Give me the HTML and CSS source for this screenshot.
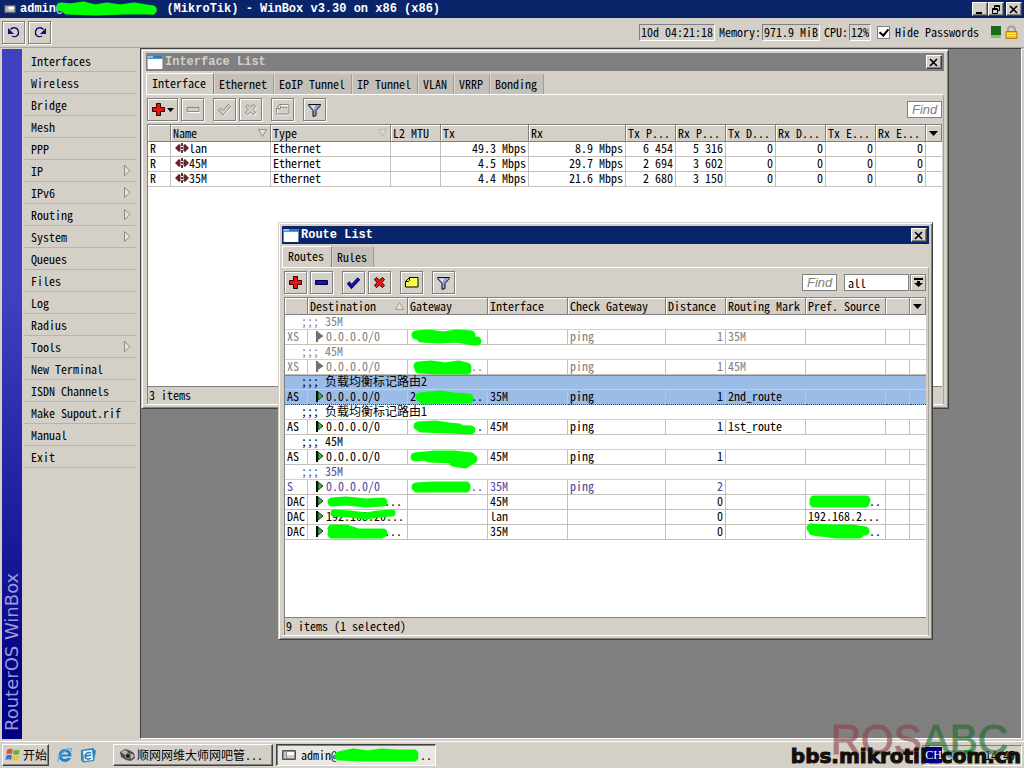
FILE: index.html
```html
<!DOCTYPE html>
<html lang="zh-CN">
<head>
<meta charset="utf-8">
<meta name="viewport" content="width=device-width, initial-scale=1">
<title>WinBox v3.30</title>
<link rel="stylesheet" href="styles.css">
</head>
<body>
<svg class="defs" aria-hidden="true">
  <symbol id="plus" viewBox="0 0 13 13"><path d="M4.500.5h4v4h4v4h-4v4h-4v-4h-4v-4h4z" fill="#e01818" stroke="#300"/></symbol>
  <symbol id="minus" viewBox="0 0 13 13"><path d="M.5 4.500h12v4h-12z" fill="#1818c0" stroke="#000040"/></symbol>
  <symbol id="minus-off" viewBox="0 0 13 13"><path d="M1.500 5.500h12v4h-12z" fill="none" stroke="#fff"/><path d="M.5 4.500h12v4h-12z" fill="#d4d0c8" stroke="#8c8880"/></symbol>
  <symbol id="check" viewBox="0 0 13 13"><path d="M1 6.500l3.500 4 7.500-8" fill="none" stroke="#000070" stroke-width="3.600"/><path d="M1.500 6.800l3 3 7-7" fill="none" stroke="#1818d0" stroke-width="1.500"/></symbol>
  <symbol id="check-off" viewBox="0 0 13 13"><path d="M1.500 7.500l2-2 2 2 6-6.500 1.500 1.500-7.500 8.500z" fill="none" stroke="#fff" transform="translate(1 1)"/><path d="M.5 7l2-2 2.500 2.500 5.500-6 2 2-7.500 8.500z" fill="#d4d0c8" stroke="#8c8880"/></symbol>
  <symbol id="cross" viewBox="0 0 13 13"><path d="M1.500 3.500l2-2 3 2.500 3-2.500 2 2-2.500 3 2.500 3-2 2-3-2.500-3 2.500-2-2 2.500-3z" fill="#e01818" stroke="#300"/></symbol>
  <symbol id="cross-off" viewBox="0 0 13 13"><path d="M1.500 3.500l2-2 3 2.500 3-2.500 2 2-2.500 3 2.500 3-2 2-3-2.500-3 2.500-2-2 2.500-3z" fill="none" stroke="#fff" transform="translate(1 1)"/><path d="M1.500 3.500l2-2 3 2.500 3-2.500 2 2-2.500 3 2.500 3-2 2-3-2.500-3 2.500-2-2 2.500-3z" fill="#d4d0c8" stroke="#8c8880"/></symbol>
  <symbol id="note" viewBox="0 0 14 13"><path d="M.5 5.500l4-4h8.500v9.500H.5z" fill="#ffff50" stroke="#000"/><path d="M.5 5.500h3l1-1v-3" fill="none" stroke="#000"/></symbol>
  <symbol id="note-off" viewBox="0 0 14 13"><path d="M1.500 6.500l3-4h9v9.500h-12z" fill="none" stroke="#fff"/><path d="M.5 5.500l3-4h9.500v9.500H.5zM.5 5.500h4v-3M6 4.500h2M9 4.500h2" fill="none" stroke="#8c8880"/></symbol>
  <symbol id="funnel" viewBox="0 0 13 14"><path d="M.5 1.500h12v1l-4.500 5v5l-3 1v-6l-4.500-5z" fill="#98a0cc" stroke="#101020"/><path d="M2.500 2.500h5l-2 4z" fill="#e0e4f4"/></symbol>
  <symbol id="undo" viewBox="0 0 14 14"><path d="M3.500 4.500C6 1.500 11 2.500 11.500 7s-4 5.500-6.500 4" fill="none" stroke="#101060" stroke-width="1.300"/><path d="M1 3v6h6z" fill="#101080"/></symbol>
  <symbol id="appicon" viewBox="0 0 14 12"><path d="M.5 1.500h13v9H.5z" fill="#8c8c94" stroke="#505058"/><path d="M2 3h2v6H2z" fill="#c8c8cc"/><path d="M5 3h7v3H5z" fill="#fff"/><path d="M5 6h7v3H5z" fill="#d0d0d4"/></symbol>
  <symbol id="winicon" viewBox="0 0 16 14"><path d="M0 0h16v14H0z" fill="#fff"/><path d="M0 0h16v3H0z" fill="#2878c8"/><path d="M0 0h6v2H0z" fill="#90c8f0"/></symbol>
  <symbol id="close" viewBox="0 0 10 9"><path d="M1 1l7 7M8 1L1 8" stroke="#000" stroke-width="1.700"/></symbol>
  <symbol id="eth" viewBox="0 0 14 12"><path d="M0 6l4-4 1.500 1v6L4 10zM14 6l-4-4-1.500 1v6l1.500 1z" fill="#702030"/><path d="M7 1v3M7 5v2M7 8v3" stroke="#000" stroke-width="1.500"/></symbol>
  <symbol id="flag" viewBox="0 0 8 11"><path d="M1 0v11" stroke="#000" stroke-width="2"/><path d="M2 1l5 4-5 4z" fill="#48b048" stroke="#083808"/></symbol>
  <symbol id="flag-off" viewBox="0 0 8 11"><path d="M1 0v11" stroke="#707070" stroke-width="2"/><path d="M2 1l5.500 4L2 9z" fill="#707070"/></symbol>
  <symbol id="down" viewBox="0 0 9 5"><path d="M0 0h9L4.500 5z" fill="#000"/></symbol>
  <symbol id="sortdown" viewBox="0 0 9 8"><path d="M.5.5h8l-4 7z" fill="#e4e0d8" stroke="#909088"/></symbol>
  <symbol id="sortup" viewBox="0 0 9 8"><path d="M.5 7.500h8l-4-7z" fill="#e4e0d8" stroke="#a0a098"/></symbol>
  <symbol id="sub" viewBox="0 0 7 11"><path d="M.5.5v10l5.500-5z" fill="#e8e4dc" stroke="#8c8880"/></symbol>
</svg>

<header class="titlebar app-title">
  <svg width="12" height="10"><use href="#appicon"/></svg>
  <h1 class="title-text">admin@<span class="mask mask-title"><svg viewBox="0 0 106 14" preserveAspectRatio="none"><path d="M4 6L14 7 28 5 40 8 52 6 66 8 80 6 99 9" /><path d="M10 9L40 10 70 9 99 9"/></svg></span> (MikroTik) - WinBox v3.30 on x86 (x86)</h1>
  <button class="winbtn" aria-label="Minimize"><svg width="10" height="9"><path d="M1 7h6v2H1z"/></svg></button><button class="winbtn" aria-label="Restore"><svg width="10" height="9"><path d="M3.500 3V.5h5v5H7M3 1.500h6M1.500 3.500h5v5h-5zM1 4.500h6" fill="none" stroke="#000"/></svg></button><button class="winbtn last" aria-label="Close"><svg width="10" height="9"><use href="#close"/></svg></button>
</header>

<div class="appbar">
  <button class="tool" aria-label="Undo"><svg width="14" height="14"><use href="#undo"/></svg></button>
  <button class="tool" aria-label="Redo"><svg class="flip" width="14" height="14"><use href="#undo"/></svg></button>
  <div class="stats">
    <span class="well">10d 04:21:18</span>
    <span>Memory:</span><span class="well tight">971.9 MiB</span>
    <span>CPU:</span><span class="well tight">12%</span>
    <label class="hide"><input type="checkbox" checked> Hide Passwords</label>
    <span class="load"></span>
    <svg width="13" height="15" viewBox="0 0 13 15"><path d="M3 7V4.500Q3 1.500 6.500 1.500T10 4.500V7" fill="none" stroke="#a8a090" stroke-width="2"/><path d="M1 6.500h11v7H1z" fill="#f4c020" stroke="#b07c10"/><path d="M2 8.500h9M2 10.500h9" stroke="#ffe888"/></svg>
  </div>
</div>

<main class="main">
  <div class="strip"><span>RouterOS WinBox</span></div>
  <nav class="menu">
    <a href="#">Interfaces</a><a href="#">Wireless</a><a href="#">Bridge</a><a href="#">Mesh</a><a href="#">PPP</a>
    <a href="#">IP<svg width="7" height="11"><use href="#sub"/></svg></a>
    <a href="#">IPv6<svg width="7" height="11"><use href="#sub"/></svg></a>
    <a href="#">Routing<svg width="7" height="11"><use href="#sub"/></svg></a>
    <a href="#">System<svg width="7" height="11"><use href="#sub"/></svg></a>
    <a href="#">Queues</a><a href="#">Files</a><a href="#">Log</a><a href="#">Radius</a>
    <a href="#">Tools<svg width="7" height="11"><use href="#sub"/></svg></a>
    <a href="#">New Terminal</a><a href="#">ISDN Channels</a><a href="#">Make Supout.rif</a><a href="#">Manual</a><a href="#">Exit</a>
  </nav>

  <div class="workspace">
    <section class="window win-interfaces">
      <div class="titlebar idle">
        <svg width="16" height="13"><use href="#winicon"/></svg>
        <h2 class="title-text">Interface List</h2>
        <button class="winbtn" aria-label="Close"><svg width="10" height="9"><use href="#close"/></svg></button>
      </div>
      <div class="tabs">
        <button class="tab active">Interface</button><button class="tab">Ethernet</button><button class="tab">EoIP Tunnel</button><button class="tab">IP Tunnel</button><button class="tab">VLAN</button><button class="tab">VRRP</button><button class="tab">Bonding</button>
      </div>
      <div class="panel">
        <div class="toolbar">
          <button class="tool wide" aria-label="Add"><svg width="13" height="13"><use href="#plus"/></svg><svg width="7" height="4" viewBox="0 0 9 5"><use href="#down"/></svg></button>
          <button class="tool" aria-label="Remove"><svg width="14" height="13"><use href="#minus-off"/></svg></button>
          <span class="gap"></span>
          <button class="tool" aria-label="Enable"><svg width="13" height="13"><use href="#check-off"/></svg></button>
          <button class="tool" aria-label="Disable"><svg width="13" height="13"><use href="#cross-off"/></svg></button>
          <span class="gap"></span>
          <button class="tool" aria-label="Comment"><svg width="14" height="13"><use href="#note-off"/></svg></button>
          <span class="gap"></span>
          <button class="tool" aria-label="Filter"><svg width="13" height="14"><use href="#funnel"/></svg></button>
          <input class="find" type="text" placeholder="Find" aria-label="Find">
        </div>
        <div class="listing">
          <table>
            <colgroup><col class="c23"><col class="c100"><col class="c120"><col class="c50"><col class="c88"><col><col class="c50"><col class="c50"><col class="c50"><col class="c50"><col class="c50"><col class="c50"><col class="c16"></colgroup>
            <thead><tr><th></th><th>Name<svg width="9" height="8"><use href="#sortdown"/></svg></th><th>Type<svg class="faint" width="9" height="8"><use href="#sortdown"/></svg></th><th>L2 MTU</th><th>Tx</th><th>Rx</th><th>Tx P...</th><th>Rx P...</th><th>Tx D...</th><th>Rx D...</th><th>Tx E...</th><th>Rx E...</th><th class="pick"><svg width="9" height="5"><use href="#down"/></svg></th></tr></thead>
            <tbody>
              <tr><td>R</td><td class="named"><svg width="14" height="12"><use href="#eth"/></svg>lan</td><td>Ethernet</td><td></td><td class="num">49.3 Mbps</td><td class="num">8.9 Mbps</td><td class="num">6 454</td><td class="num">5 316</td><td class="num">0</td><td class="num">0</td><td class="num">0</td><td class="num">0</td><td></td></tr>
              <tr><td>R</td><td class="named"><svg width="14" height="12"><use href="#eth"/></svg>45M</td><td>Ethernet</td><td></td><td class="num">4.5 Mbps</td><td class="num">29.7 Mbps</td><td class="num">2 694</td><td class="num">3 602</td><td class="num">0</td><td class="num">0</td><td class="num">0</td><td class="num">0</td><td></td></tr>
              <tr><td>R</td><td class="named"><svg width="14" height="12"><use href="#eth"/></svg>35M</td><td>Ethernet</td><td></td><td class="num">4.4 Mbps</td><td class="num">21.6 Mbps</td><td class="num">2 680</td><td class="num">3 150</td><td class="num">0</td><td class="num">0</td><td class="num">0</td><td class="num">0</td><td></td></tr>
            </tbody>
          </table>
        </div>
        <div class="status">3 items</div>
      </div>
    </section>

    <section class="window win-routes">
      <div class="titlebar">
        <svg width="16" height="13"><use href="#winicon"/></svg>
        <h2 class="title-text">Route List</h2>
        <button class="winbtn" aria-label="Close"><svg width="10" height="9"><use href="#close"/></svg></button>
      </div>
      <div class="tabs">
        <button class="tab active">Routes</button><button class="tab">Rules</button>
      </div>
      <div class="panel">
        <div class="toolbar">
          <button class="tool" aria-label="Add"><svg width="13" height="13"><use href="#plus"/></svg></button>
          <button class="tool" aria-label="Remove"><svg width="13" height="13"><use href="#minus"/></svg></button>
          <span class="gap"></span>
          <button class="tool" aria-label="Enable"><svg width="13" height="13"><use href="#check"/></svg></button>
          <button class="tool" aria-label="Disable"><svg width="13" height="13"><use href="#cross"/></svg></button>
          <span class="gap"></span>
          <button class="tool" aria-label="Comment"><svg width="14" height="13"><use href="#note"/></svg></button>
          <span class="gap"></span>
          <button class="tool" aria-label="Filter"><svg width="13" height="14"><use href="#funnel"/></svg></button>
          <input class="find" type="text" placeholder="Find" aria-label="Find">
          <select class="scope" aria-label="Routing table"><option>all</option></select>
          <button class="drop" aria-label="Choose routing table"><svg width="9" height="9"><path d="M0 0h9v2H0zM3 3h3v2h3L4.500 9 0 5h3z"/></svg></button>
        </div>
        <div class="listing">
          <table>
            <colgroup><col class="c23"><col class="c100"><col class="c80"><col class="c80"><col class="c98"><col class="c60"><col class="c80"><col class="c80"><col><col class="c16"></colgroup>
            <thead><tr><th></th><th>Destination<svg width="9" height="8"><use href="#sortup"/></svg></th><th>Gateway</th><th>Interface</th><th>Check Gateway</th><th>Distance</th><th>Routing Mark</th><th>Pref. Source</th><th></th><th class="pick"><svg width="9" height="5"><use href="#down"/></svg></th></tr></thead>
            <tbody>
              <tr class="off"><td class="note" colspan="10">;;; 35M</td></tr>
              <tr class="off"><td>XS</td><td class="dest"><svg width="8" height="11"><use href="#flag-off"/></svg>0.0.0.0/0</td><td class="over"><span class="mask"><svg viewBox="0 0 74 16"><path d="M7 5L20 4 34 6 48 4 62 5M12 8L30 9 48 8 64 11 68 11"/></svg></span></td><td></td><td>ping</td><td class="num">1</td><td>35M</td><td></td><td></td><td></td></tr>
              <tr class="off"><td class="note" colspan="10">;;; 45M</td></tr>
              <tr class="off"><td>XS</td><td class="dest"><svg width="8" height="11"><use href="#flag-off"/></svg>0.0.0.0/0</td><td class="over"><span class="mask"><svg viewBox="0 0 74 16"><path d="M9 6L22 5 36 7 50 5 58 7M10 9L30 10 58 10"/></svg></span><span class="dots">..</span></td><td></td><td>ping</td><td class="num">1</td><td>45M</td><td></td><td></td><td></td></tr>
              <tr class="sel top"><td class="note" colspan="10">;;; 负载均衡标记路由2</td></tr>
              <tr class="sel bottom"><td>AS</td><td class="dest"><svg width="8" height="11"><use href="#flag"/></svg>0.0.0.0/0</td><td class="over">2<span class="mask"><svg viewBox="0 0 74 16"><path d="M11 7L30 5 45 7 60 8M14 10L36 9 60 9"/></svg></span><span class="dots">..</span></td><td>35M</td><td>ping</td><td class="num">1</td><td>2nd_route</td><td></td><td></td><td></td></tr>
              <tr><td class="note" colspan="10">;;; 负载均衡标记路由1</td></tr>
              <tr><td>AS</td><td class="dest"><svg width="8" height="11"><use href="#flag"/></svg>0.0.0.0/0</td><td class="over"><span class="mask"><svg viewBox="0 0 74 16"><path d="M9 6L26 5 40 7 50 8M12 8L40 9 62 10"/></svg></span><span class="dots">..</span></td><td>45M</td><td>ping</td><td class="num">1</td><td>1st_route</td><td></td><td></td><td></td></tr>
              <tr><td class="note" colspan="10">;;; 45M</td></tr>
              <tr><td>AS</td><td class="dest"><svg width="8" height="11"><use href="#flag"/></svg>0.0.0.0/0</td><td class="over"><span class="mask"><svg viewBox="0 0 74 16"><path d="M6 7L26 5 45 5 62 7M20 8L44 9 64 9M44 12L56 14 64 9"/></svg></span></td><td>45M</td><td>ping</td><td class="num">1</td><td></td><td></td><td></td><td></td></tr>
              <tr class="inactive"><td class="note" colspan="10">;;; 35M</td></tr>
              <tr class="inactive"><td>S</td><td class="dest"><svg width="8" height="11"><use href="#flag"/></svg>0.0.0.0/0</td><td class="over"><span class="mask"><svg viewBox="0 0 74 16"><path d="M7 7L24 6 42 6 57 6M8 8L40 8 57 8"/></svg></span><span class="dots">..</span></td><td>35M</td><td>ping</td><td class="num">2</td><td></td><td></td><td></td><td></td></tr>
              <tr><td>DAC</td><td class="dest over"><svg width="8" height="11"><use href="#flag"/></svg><span class="mask shift"><svg viewBox="0 0 74 16"><path d="M6 7L20 6 40 8 57 7"/></svg></span><span class="dots end">...</span></td><td></td><td>45M</td><td></td><td class="num">0</td><td></td><td class="over"><span class="mask"><svg viewBox="0 0 74 16"><path d="M7 5L28 5 46 5 59 5M7 8L30 8 58 8"/></svg></span><span class="dots">..</span></td><td></td><td></td></tr>
              <tr><td>DAC</td><td class="dest over"><svg width="8" height="11"><use href="#flag"/></svg>192.168.20...<span class="mask shift thin"><svg viewBox="0 0 74 16"><path d="M8 3L24 4 40 6 52 4 66 3"/></svg></span></td><td></td><td>lan</td><td></td><td class="num">0</td><td></td><td>192.168.2...</td><td></td><td></td></tr>
              <tr><td>DAC</td><td class="dest over"><svg width="8" height="11"><use href="#flag"/></svg><span class="mask shift"><svg viewBox="0 0 74 16"><path d="M6 4L20 4 32 8 57 8M6 9L30 9 55 9"/></svg></span><span class="dots end">...</span></td><td></td><td>35M</td><td></td><td class="num">0</td><td></td><td class="over"><span class="mask"><svg viewBox="0 0 74 16"><path d="M4 3L26 4 45 4 58 6M6 6L30 9 52 9"/></svg></span><span class="dots">..</span></td><td></td><td></td></tr>
            </tbody>
          </table>
        </div>
        <div class="status">9 items (1 selected)</div>
      </div>
    </section>
  </div>
</main>

<footer class="taskbar">
  <button class="task start"><svg width="16" height="16" viewBox="0 0 16 16"><path d="M2 3q3-2 5.500-.5L7 7Q4 6 1.500 7.500z" fill="#e05028"/><path d="M8.500 3q3 1 6-.5L14 7q-3 1.500-6 0z" fill="#60b040"/><path d="M1.500 8.500q3-1.500 5.500 0L6 13q-2.500-1.500-5.500 0z" fill="#4070d0"/><path d="M8 8.500q3 1.500 6 0L13 13q-3 1.500-6 0z" fill="#f0c030"/></svg>开始</button>
  <a href="#" class="quick" aria-label="Internet Explorer"><svg width="16" height="16" viewBox="0 0 16 16"><circle cx="8" cy="8.500" r="5" fill="none" stroke="#2080c8" stroke-width="3"/><path d="M4 8.500h9" stroke="#2080c8" stroke-width="2"/><path d="M10 11h5V9.500h-5z" fill="#d4d0c8"/><path d="M1.500 14.500C-1 11 9 1 14 1.500q1.500.5 0 3" fill="none" stroke="#58b0e8" stroke-width="1.300"/></svg></a>
  <a href="#" class="quick" aria-label="Outlook Express"><svg width="17" height="16" viewBox="0 0 17 16"><path d="M1 3l12-2 3 3-2 10-11 1.500L1 13z" fill="#3088b8"/><path d="M3 4l9-1 1 10-9 1z" fill="#e8f4fc"/><path d="M11 6Q8 4.500 6 7t0 4.500q2 1.500 5-.5M6 9l5-1" fill="none" stroke="#2878b0" stroke-width="1.500"/></svg></a>
  <button class="task app"><svg width="17" height="14" viewBox="0 0 17 14"><path d="M1 4l5-3 4 1 5 3 1 5-4 3-5-1-5-3z" fill="#505050"/><path d="M2 4l4-2 3 2-3 3zM11 6l3 0 1 3-3 2z" fill="#b8b8b8"/><circle cx="9" cy="8" r="2.500" fill="#181818" stroke="#999"/></svg>顺网网维大师网吧管...</button>
  <button class="task app pressed"><svg width="14" height="12"><use href="#appicon"/></svg><span class="task-label">admin@<span class="mask mask-task"><svg viewBox="0 0 86 16" preserveAspectRatio="none"><path d="M6 9L20 6 34 8 48 6 62 7 79 7M6 9L30 10 60 10 79 10"/></svg></span>..</span></button>
  <div class="tray"><span class="ime">CH</span><svg width="12" height="12" viewBox="0 0 12 12"><path d="M1 2h8v6H1z" fill="#70b8e8" stroke="#3878a8"/><path d="M4 9h6v2H4z" fill="#90a0b0"/></svg><svg width="9" height="14" viewBox="0 0 9 14"><path d="M0 2h9v4H6v7H3V6H0z" fill="#20c030"/></svg><time>14:45</time></div>
</footer>
<div class="mark-logo"><span class="mark-red">ROS</span><span class="mark-green">ABC</span></div>
<div class="mark-url">bbs.mikrotik.com.cn</div>
</body>
</html>
```

FILE: styles.css
```css
:root {
  --face: #d4d0c8;
  --shade: #808080;
  --dark: #404040;
  --navy: #0a246a;
}
* { box-sizing: border-box; }
body {
  position: relative;
  display: flex;
  flex-direction: column;
  height: 100vh;
  margin: 0;
  overflow: hidden;
  background: var(--face);
  color: #000;
  font: 12px/14px "Noto Sans Mono CJK SC", "Noto Sans CJK SC", monospace;
}
button, input, select { margin: 0; padding: 0; border-radius: 0; font: inherit; color: inherit; }
svg { display: block; flex: none; }
.defs { position: absolute; width: 0; height: 0; }
a { color: inherit; text-decoration: none; }

/* title bars */
.titlebar {
  display: flex;
  align-items: center;
  flex: none;
  height: 18px;
  padding: 0 2px 0 1px;
  background: var(--navy);
  color: #fff;
}
.titlebar > svg { margin-right: 2px; }
.titlebar.idle { background: var(--shade); color: var(--face); }
.app-title { padding-left: 4px; }
.app-title > svg { margin-right: 4px; }
.title-text {
  flex: 1;
  margin: 0;
  font: bold 12px/16px "Liberation Mono", monospace;
  white-space: pre;
}
.winbtn {
  display: flex;
  align-items: center;
  justify-content: center;
  width: 16px;
  height: 14px;
  border: 1px solid;
  border-color: #fff var(--dark) var(--dark) #fff;
  box-shadow: inset -1px -1px var(--shade);
  background: var(--face);
}
.winbtn.last { margin-left: 2px; }

/* application bar */
.appbar {
  display: flex;
  align-items: center;
  gap: 3px;
  flex: none;
  height: 30px;
  padding: 0 6px 1px 2px;
  border-bottom: 1px solid #a8a49c;
}
.tool {
  display: flex;
  align-items: center;
  justify-content: center;
  gap: 2px;
  width: 23px;
  height: 23px;
  border: 1px solid var(--shade);
  box-shadow: inset 1px 1px #fff, 1px 1px #fff;
  background: var(--face);
}
.tool.wide { width: 31px; }
.flip { transform: scaleX(-1); }
.stats { display: flex; align-items: center; gap: 4px; margin-left: auto; }
.well {
  padding: 0 1px 1px;
  border: 1px solid;
  border-color: var(--shade) #fff #fff var(--shade);
}
.tight { margin-left: -3px; }
.hide { display: flex; align-items: center; gap: 5px; margin: 0 8px 0 2px; }
.hide input {
  appearance: none;
  width: 13px;
  height: 13px;
  border: 1px solid var(--shade);
  background: #fff;
}
.hide input:checked::after {
  content: "";
  display: block;
  width: 4px;
  height: 7px;
  margin: 0 0 0 3px;
  border: solid #000;
  border-width: 0 2px 2px 0;
  transform: rotate(40deg);
}
.load { width: 10px; height: 12px; border-bottom: 3px solid #70c870; background: #206818; }

/* main area */
.main { display: flex; flex: 1; min-height: 0; padding: 0 2px 1px; }
.strip {
  width: 20px;
  margin-top: 1px;
  padding-top: 8px;
  background: linear-gradient(#000080 5%, #4040c0 65%);
  color: #9c9cd8;
  font: 18px/20px "DejaVu Sans", sans-serif;
  writing-mode: vertical-rl;
  transform: rotate(180deg);
}
.menu { width: 118px; padding: 2px 4px 0 2px; }
.menu a {
  display: flex;
  align-items: center;
  justify-content: space-between;
  height: 22px;
  padding: 0 5px 0 7px;
  border-bottom: 1px solid #b8b4ac;
}
.workspace {
  position: relative;
  flex: 1;
  overflow: hidden;
  border: 1px solid;
  border-color: var(--dark) #fff #fff var(--dark);
  background: var(--shade);
}

/* child windows */
.window {
  position: absolute;
  display: flex;
  flex-direction: column;
  padding: 3px;
  border: 1px solid;
  border-color: var(--face) var(--dark) var(--dark) var(--face);
  box-shadow: inset 1px 1px #fff, inset -1px -1px var(--shade);
  background: var(--face);
}
.win-interfaces { left: 0; top: 0; width: 808px; height: 360px; padding: 3px 4px; }
.win-routes { left: 137px; top: 173px; width: 655px; height: 418px; }
.tabs { display: flex; align-items: flex-end; height: 23px; }
.tab {
  height: 20px;
  padding: 0 6px 0 5px;
  border: 0;
  border-right: 1px solid #a09c94;
  background: #c4c0b8;
}
.tab + .tab { box-shadow: inset 1px 0 #dcd8d0; }
.tab.active {
  height: 21px;
  padding: 0 7px 2px 5px;
  border-top: 1px solid #fff;
  border-left: 1px solid #fff;
  border-right-color: var(--shade);
  background: var(--face);
}
.panel {
  display: flex;
  flex-direction: column;
  flex: 1;
  min-height: 0;
  padding: 0 1px 0 1px;
  border: 1px solid;
  border-color: #fff #a8a49c #fff var(--face);
  border-left: 0;
}
.win-routes .panel { padding: 0 2px; }
.toolbar { display: flex; align-items: center; gap: 3px; padding: 3px 0; }
.gap { width: 3px; }
.find {
  width: 35px;
  height: 17px;
  margin-left: auto;
  padding: 0 0 0 4px;
  border: 1px solid var(--shade);
  background: #fff;
  font: italic 13px/15px "Liberation Sans", sans-serif;
}
.find::placeholder { color: #808080; opacity: 1; }
.scope {
  appearance: none;
  width: 65px;
  height: 17px;
  margin-left: 4px;
  padding: 0 3px;
  border: 1px solid var(--shade);
  background: #fff;
  line-height: 14px;
}
.scope + .drop { margin-left: -2px; }
.drop {
  display: flex;
  align-items: center;
  justify-content: center;
  width: 16px;
  height: 17px;
  border: 1px solid var(--shade);
  box-shadow: inset 1px 1px #fff;
  background: var(--face);
}
.listing {
  flex: 1;
  min-height: 0;
  border: solid var(--shade);
  border-width: 1px 0 1px 1px;
  background: #fff;
}
.status { height: 17px; padding-left: 1px; border-left: 1px solid var(--shade); line-height: 16px; }

/* tables */
table { width: 100%; border-collapse: separate; border-spacing: 0; table-layout: fixed; }
.c16 { width: 16px; }
.c23 { width: 23px; }
.c50 { width: 50px; }
.c60 { width: 60px; }
.c80 { width: 80px; }
.c88 { width: 88px; }
.c98 { width: 98px; }
.c100 { width: 100px; }
.c120 { width: 120px; }
th {
  position: relative;
  height: 17px;
  padding: 0 0 0 2px;
  border: solid var(--shade);
  border-width: 0 1px 1px 0;
  box-shadow: inset 1px 1px #fff;
  background: var(--face);
  font-weight: normal;
  text-align: left;
  vertical-align: top;
  line-height: 15px;
  white-space: nowrap;
  overflow: hidden;
}
th svg { position: absolute; right: 3px; top: 4px; }
th.pick svg { top: 6px; }
.faint { opacity: 0.4; }
td {
  height: 15px;
  padding: 0 0 0 2px;
  border: solid #c4c0b8;
  border-width: 0 1px 1px 0;
  vertical-align: top;
  line-height: 12px;
  white-space: nowrap;
}
td:last-child { border-right: 0; }
td.num { padding: 0 2px 0 0; text-align: right; }
td svg { display: inline-block; vertical-align: top; }
.named { padding-left: 4px; }
.dest { padding-left: 8px; }
.dest > svg { margin: 1px 2px 0 0; }
.note { padding-left: 16px; }
.win-routes tr:has(.note) td { border-bottom-color: #d4d0c8; }
.off { color: #808080; }
.inactive { color: #4848a0; }
.sel td { background: #9cbce8; border-color: #b4c8e4; }
.sel.top td { box-shadow: inset 0 1px #7088a8; }
.sel.bottom td { border-bottom: 1px dotted #304868; }

/* painted-over addresses */
.over { position: relative; }
.mask svg { fill: none; stroke: #00ff00; stroke-width: 9px; stroke-linecap: round; stroke-linejoin: round; overflow: visible; }
td .mask { position: absolute; left: 1px; top: 0; z-index: 1; }
td .mask svg { width: 74px; height: 16px; }
td .mask.shift { left: 18px; }
.mask.thin svg { stroke-width: 7px; }
.dots { position: absolute; right: 4px; top: 0; }
.dots.end { right: 5px; }
.mask-title { display: inline-block; width: 102px; height: 14px; margin: 0 0 0 -6px; vertical-align: top; }
.mask-title svg, .mask-task svg { width: 100%; height: 100%; }
.mask-task { width: 88px; height: 16px; margin: 0 -1px 0 -4px; }

/* task bar */
.taskbar {
  display: flex;
  align-items: center;
  flex: none;
  height: 28px;
  padding: 1px 2px 0;
  border-top: 1px solid var(--face);
  box-shadow: inset 0 1px #fff;
}
.task {
  display: flex;
  align-items: center;
  height: 22px;
  border: 1px solid;
  border-color: #fff var(--dark) var(--dark) #fff;
  box-shadow: inset -1px -1px var(--shade);
  background: var(--face);
  white-space: nowrap;
}
.start { gap: 2px; width: 47px; margin-right: 8px; padding-left: 2px; }
.quick { margin-right: 7px; }
.app { gap: 1px; width: 160px; padding-left: 5px; }
.quick + .app { margin: 0 3px 0 9px; }
.app.pressed {
  gap: 5px;
  border-color: var(--dark) #fff #fff var(--dark);
  box-shadow: inset 1px 1px var(--shade);
  background: #e9e7e3;
}
.task-label { display: flex; align-items: center; }
.tray {
  display: flex;
  align-items: center;
  gap: 5px;
  width: 100px;
  height: 21px;
  margin-left: auto;
  padding: 0 6px 0 2px;
  border: 1px solid;
  border-color: var(--shade) #fff #fff var(--shade);
}
.tray time { margin-left: auto; }
.ime {
  position: relative;
  z-index: 2;
  width: 17px;
  background: #000080;
  color: #fff;
  font: 12px/16px "Liberation Serif", serif;
  text-align: center;
}

/* watermark */
.mark-logo {
  position: absolute;
  right: 16px;
  bottom: 5px;
  font: 42px/46px "Liberation Sans", sans-serif;
  opacity: 0.6;
  -webkit-text-stroke: 1px;
  pointer-events: none;
}
.mark-red { color: #8c4048; }
.mark-green { color: #206828; }
.mark-url {
  position: absolute;
  right: 3px;
  bottom: 1px;
  color: #141008;
  font: bold 20px/22px "DejaVu Sans", sans-serif;
  -webkit-text-stroke: 1px;
  pointer-events: none;
}
```
